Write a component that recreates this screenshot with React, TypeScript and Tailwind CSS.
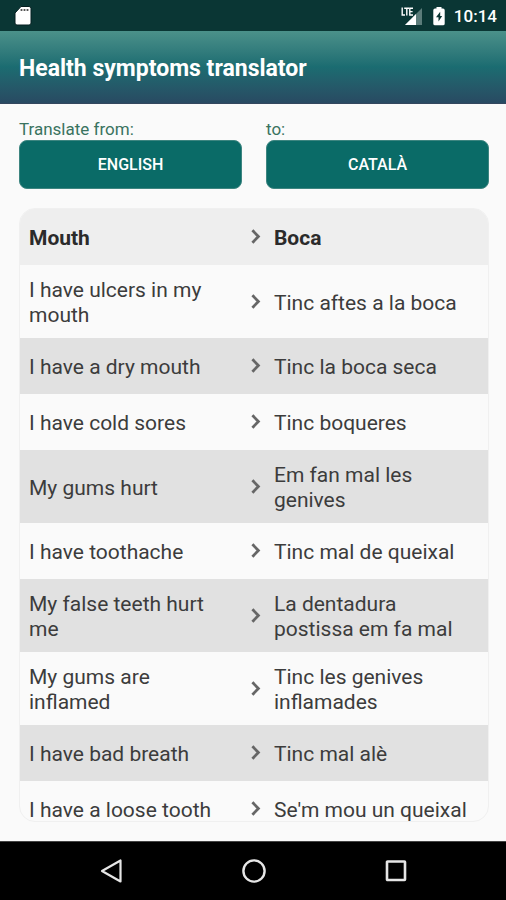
type Phrase = { from: string; to: string };

const phrases: Phrase[] = [
  { from: "I have ulcers in my mouth", to: "Tinc aftes a la boca" },
  { from: "I have a dry mouth", to: "Tinc la boca seca" },
  { from: "I have cold sores", to: "Tinc boqueres" },
  { from: "My gums hurt", to: "Em fan mal les genives" },
  { from: "I have toothache", to: "Tinc mal de queixal" },
  { from: "My false teeth hurt me", to: "La dentadura postissa em fa mal" },
  { from: "My gums are inflamed", to: "Tinc les genives inflamades" },
  { from: "I have bad breath", to: "Tinc mal alè" },
  { from: "I have a loose tooth", to: "Se'm mou un queixal" },
];

function Chevron() {
  return (
    <svg className="mx-auto block h-4 w-4" viewBox="0 0 16 16" fill="none" stroke="#666666" strokeWidth="2.8" aria-hidden="true">
      <path d="M3.4 1.3 L9.4 7.5 L3.4 13.7" />
    </svg>
  );
}

function StatusBar() {
  return (
    <div className="flex h-[31px] shrink-0 items-center justify-between bg-[#0a3634] pr-[9px] pl-[14px] text-white">
      <svg className="h-[22px] w-[18px]" viewBox="0 0 18 22" aria-label="SD card">
        <path d="M7 1.5 H15 Q17 1.5 17 3.5 V18 Q17 20 15 20 H3 Q1 20 1 18 V8 Z" fill="#fff" stroke="#051f20" strokeWidth="1" />
        <path d="M7.5 4 V6 M10.5 4 V6 M13.5 4 V6" stroke="#555" strokeWidth="1.8" />
      </svg>
      <div className="flex items-center">
        <svg className="mr-[10px] h-5 w-[22px]" viewBox="0 0 22 20" aria-label="LTE signal">
          <path d="M21 2 V19 H4 Z" fill="#5b7c7a" />
          <path d="M15 8 V19 H4 Z" fill="#fff" />
          <path d="M0 1 H12.5 V9 L10 10.5 H0 Z" fill="#0a3634" />
          <path d="M1.2 1.5 V9 H4 M3.2 2.2 H8 M5.8 2.2 V9.6 M12 2.2 H8.8 V9 H12 M8.8 5.6 H11.6" fill="none" stroke="#fff" strokeWidth="1.4" />
        </svg>
        <svg className="mr-[9px] h-5 w-3" viewBox="0 0 12 20" aria-label="Battery charging">
          <path d="M3.5 1 H8.5 V2.5 H10 Q11.7 2.5 11.7 4.2 V17.8 Q11.7 19.3 10 19.3 H2 Q.3 19.3 .3 17.8 V4.2 Q.3 2.5 2 2.5 H3.5 Z" fill="#fff" />
          <path d="M7.2 5.8 L3 11.2 H5.5 V15.6 L9.2 10 H7.2 Z" fill="#0a3634" />
        </svg>
        <span className="text-[17px] leading-5 font-medium">10:14</span>
      </div>
    </div>
  );
}

function LanguagePicker({ id, label, value }: { id: string; label: string; value: string }) {
  return (
    <div className="flex flex-1 flex-col">
      <label htmlFor={id} className="text-[17px] leading-5 text-[#39735f]">
        {label}
      </label>
      <button id={id} type="button" className="mt-px h-[49px] rounded-lg border border-[#3d8580] bg-[#0a6b67] text-[16px] font-medium text-white">
        {value}
      </button>
    </div>
  );
}

export default function App() {
  return (
    <div className="flex h-screen flex-col bg-[#fafafa] font-['Roboto',sans-serif]">
      <StatusBar />
      <header className="flex h-[73px] shrink-0 items-center border-b border-[#33475e] bg-linear-to-b from-[#4b918a] via-[#1b6c71] to-[#284a62] px-[19px] pt-1">
        <h1 className="text-[23px] leading-7 font-bold text-white">Health symptoms translator</h1>
      </header>
      <main className="flex min-h-0 flex-1 flex-col pt-[15px] pr-[17px] pb-[19px] pl-[19px]">
        <div className="flex shrink-0 gap-6">
          <LanguagePicker id="from" label="Translate from:" value="ENGLISH" />
          <LanguagePicker id="to" label="to:" value="CATALÀ" />
        </div>
        <div className="mt-[19px] min-h-0 flex-1 overflow-hidden rounded-2xl border border-[#f0f0f0]">
          <table className="w-full table-fixed text-left text-[21px] leading-[25px] text-[#3c3c3c]">
            <colgroup>
              <col className="w-[47%]" />
              <col className="w-[34px]" />
              <col />
            </colgroup>
            <thead>
              <tr className="h-14 bg-[#eeeeee] text-[#2b2b2b]">
                <th scope="col" className="pt-[2px] pr-[10px] pl-[9px] font-bold">Mouth</th>
                <td><Chevron /></td>
                <th scope="col" className="pt-[2px] pr-[10px] font-bold">Boca</th>
              </tr>
            </thead>
            <tbody>
              {phrases.map((phrase) => (
                <tr key={phrase.from} className="h-14 even:bg-[#e1e1e1]">
                  <td className="pt-[13px] pr-[10px] pb-[10px] pl-[9px]">{phrase.from}</td>
                  <td><Chevron /></td>
                  <td className="pt-[13px] pr-[10px] pb-[10px]">{phrase.to}</td>
                </tr>
              ))}
            </tbody>
          </table>
        </div>
      </main>
      <nav className="flex h-[59px] shrink-0 items-center justify-center gap-[118px] border-t border-[#444] bg-black pl-px text-[#e6e6e6]">
        <button type="button" aria-label="Back">
          <svg className="h-6 w-6" viewBox="0 0 24 24" fill="none" stroke="currentColor" strokeWidth="2.2" strokeLinejoin="round">
            <path d="M20.5 1.5 V22.5 L2 12 Z" />
          </svg>
        </button>
        <button type="button" aria-label="Home">
          <svg className="h-6 w-6" viewBox="0 0 24 24" fill="none" stroke="currentColor" strokeWidth="2.4">
            <circle cx="12" cy="12" r="10.6" />
          </svg>
        </button>
        <button type="button" aria-label="Recent apps">
          <svg className="h-6 w-6" viewBox="0 0 24 24" fill="none" stroke="currentColor" strokeWidth="2.6" strokeLinejoin="round">
            <rect x="3" y="2.5" width="18" height="18.5" rx=".5" />
          </svg>
        </button>
      </nav>
    </div>
  );
}
